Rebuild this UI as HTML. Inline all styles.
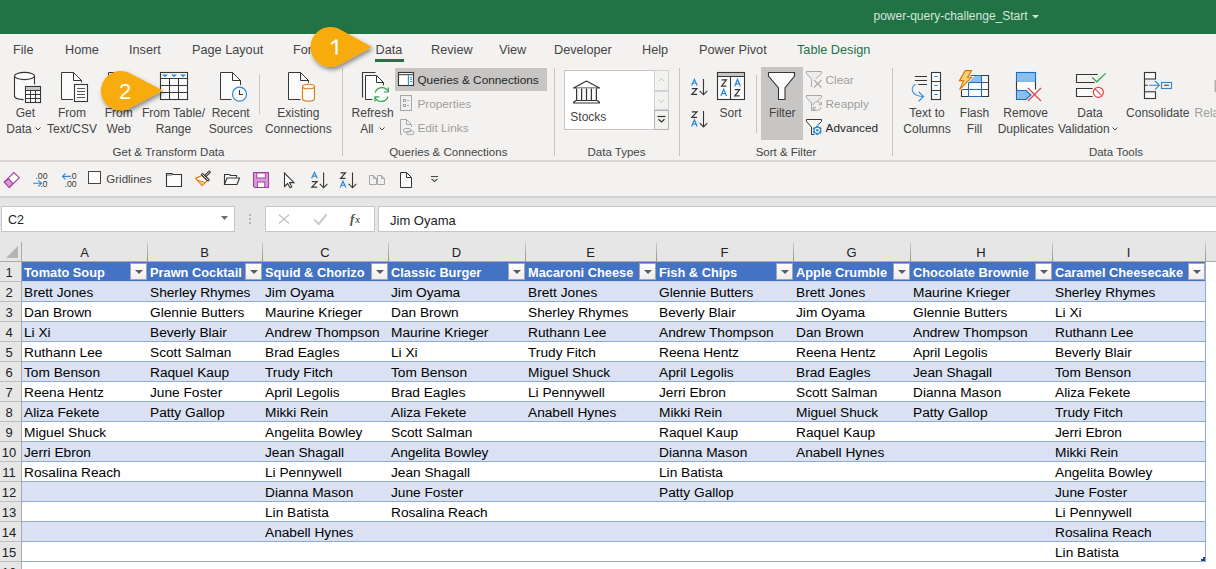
<!DOCTYPE html><html><head><meta charset="utf-8"><style>
html,body{margin:0;padding:0;width:1216px;height:569px;overflow:hidden;background:#f3f2f1;font-family:"Liberation Sans",sans-serif;position:relative}
div{box-sizing:border-box}
svg{overflow:visible}
</style></head><body>
<div style="position:absolute;left:0px;top:242px;width:1216px;height:20px;background:#e6e6e6"></div>
<div style="position:absolute;left:0px;top:262px;width:22px;height:307px;background:#e6e6e6"></div>
<div style="position:absolute;left:22px;top:262px;width:1194px;height:307px;background:#fff"></div>
<div style="position:absolute;left:21px;top:242px;width:1px;height:20px;background:linear-gradient(#cdcdcd,#8f8f8f)"></div>
<div style="position:absolute;left:147px;top:242px;width:1px;height:20px;background:linear-gradient(#cdcdcd,#8f8f8f)"></div>
<div style="position:absolute;left:262px;top:242px;width:1px;height:20px;background:linear-gradient(#cdcdcd,#8f8f8f)"></div>
<div style="position:absolute;left:388px;top:242px;width:1px;height:20px;background:linear-gradient(#cdcdcd,#8f8f8f)"></div>
<div style="position:absolute;left:525px;top:242px;width:1px;height:20px;background:linear-gradient(#cdcdcd,#8f8f8f)"></div>
<div style="position:absolute;left:656px;top:242px;width:1px;height:20px;background:linear-gradient(#cdcdcd,#8f8f8f)"></div>
<div style="position:absolute;left:793px;top:242px;width:1px;height:20px;background:linear-gradient(#cdcdcd,#8f8f8f)"></div>
<div style="position:absolute;left:910px;top:242px;width:1px;height:20px;background:linear-gradient(#cdcdcd,#8f8f8f)"></div>
<div style="position:absolute;left:1052px;top:242px;width:1px;height:20px;background:linear-gradient(#cdcdcd,#8f8f8f)"></div>
<div style="position:absolute;left:1205px;top:242px;width:1px;height:20px;background:linear-gradient(#cdcdcd,#8f8f8f)"></div>
<div style="position:absolute;left:0px;top:261px;width:1216px;height:1px;background:#ababab"></div>
<div style="position:absolute;left:21px;top:242px;width:1px;height:327px;background:#ababab"></div>
<svg style="position:absolute;left:6px;top:246px" width="12" height="12"><polygon points="12,0 12,12 0,12" fill="#b4b4b4"/></svg>
<div style="position:absolute;left:22px;top:242px;width:125px;height:20px;text-align:center;line-height:22px;font-size:13px;color:#222">A</div>
<div style="position:absolute;left:147px;top:242px;width:115px;height:20px;text-align:center;line-height:22px;font-size:13px;color:#222">B</div>
<div style="position:absolute;left:262px;top:242px;width:126px;height:20px;text-align:center;line-height:22px;font-size:13px;color:#222">C</div>
<div style="position:absolute;left:388px;top:242px;width:137px;height:20px;text-align:center;line-height:22px;font-size:13px;color:#222">D</div>
<div style="position:absolute;left:525px;top:242px;width:131px;height:20px;text-align:center;line-height:22px;font-size:13px;color:#222">E</div>
<div style="position:absolute;left:656px;top:242px;width:137px;height:20px;text-align:center;line-height:22px;font-size:13px;color:#222">F</div>
<div style="position:absolute;left:793px;top:242px;width:117px;height:20px;text-align:center;line-height:22px;font-size:13px;color:#222">G</div>
<div style="position:absolute;left:910px;top:242px;width:142px;height:20px;text-align:center;line-height:22px;font-size:13px;color:#222">H</div>
<div style="position:absolute;left:1052px;top:242px;width:153px;height:20px;text-align:center;line-height:22px;font-size:13px;color:#222">I</div>
<div style="position:absolute;left:0px;top:262px;width:18px;height:19px;text-align:center;line-height:21px;font-size:13px;color:#222">1</div>
<div style="position:absolute;left:0px;top:281px;width:21px;height:1px;background:#bdbdbd"></div>
<div style="position:absolute;left:0px;top:282px;width:18px;height:19px;text-align:center;line-height:21px;font-size:13px;color:#222">2</div>
<div style="position:absolute;left:0px;top:301px;width:21px;height:1px;background:#bdbdbd"></div>
<div style="position:absolute;left:0px;top:302px;width:18px;height:19px;text-align:center;line-height:21px;font-size:13px;color:#222">3</div>
<div style="position:absolute;left:0px;top:321px;width:21px;height:1px;background:#bdbdbd"></div>
<div style="position:absolute;left:0px;top:322px;width:18px;height:19px;text-align:center;line-height:21px;font-size:13px;color:#222">4</div>
<div style="position:absolute;left:0px;top:341px;width:21px;height:1px;background:#bdbdbd"></div>
<div style="position:absolute;left:0px;top:342px;width:18px;height:19px;text-align:center;line-height:21px;font-size:13px;color:#222">5</div>
<div style="position:absolute;left:0px;top:361px;width:21px;height:1px;background:#bdbdbd"></div>
<div style="position:absolute;left:0px;top:362px;width:18px;height:19px;text-align:center;line-height:21px;font-size:13px;color:#222">6</div>
<div style="position:absolute;left:0px;top:381px;width:21px;height:1px;background:#bdbdbd"></div>
<div style="position:absolute;left:0px;top:382px;width:18px;height:19px;text-align:center;line-height:21px;font-size:13px;color:#222">7</div>
<div style="position:absolute;left:0px;top:401px;width:21px;height:1px;background:#bdbdbd"></div>
<div style="position:absolute;left:0px;top:402px;width:18px;height:19px;text-align:center;line-height:21px;font-size:13px;color:#222">8</div>
<div style="position:absolute;left:0px;top:421px;width:21px;height:1px;background:#bdbdbd"></div>
<div style="position:absolute;left:0px;top:422px;width:18px;height:19px;text-align:center;line-height:21px;font-size:13px;color:#222">9</div>
<div style="position:absolute;left:0px;top:441px;width:21px;height:1px;background:#bdbdbd"></div>
<div style="position:absolute;left:0px;top:442px;width:18px;height:19px;text-align:center;line-height:21px;font-size:13px;color:#222">10</div>
<div style="position:absolute;left:0px;top:461px;width:21px;height:1px;background:#bdbdbd"></div>
<div style="position:absolute;left:0px;top:462px;width:18px;height:19px;text-align:center;line-height:21px;font-size:13px;color:#222">11</div>
<div style="position:absolute;left:0px;top:481px;width:21px;height:1px;background:#bdbdbd"></div>
<div style="position:absolute;left:0px;top:482px;width:18px;height:19px;text-align:center;line-height:21px;font-size:13px;color:#222">12</div>
<div style="position:absolute;left:0px;top:501px;width:21px;height:1px;background:#bdbdbd"></div>
<div style="position:absolute;left:0px;top:502px;width:18px;height:19px;text-align:center;line-height:21px;font-size:13px;color:#222">13</div>
<div style="position:absolute;left:0px;top:521px;width:21px;height:1px;background:#bdbdbd"></div>
<div style="position:absolute;left:0px;top:522px;width:18px;height:19px;text-align:center;line-height:21px;font-size:13px;color:#222">14</div>
<div style="position:absolute;left:0px;top:541px;width:21px;height:1px;background:#bdbdbd"></div>
<div style="position:absolute;left:0px;top:542px;width:18px;height:19px;text-align:center;line-height:21px;font-size:13px;color:#222">15</div>
<div style="position:absolute;left:0px;top:561px;width:21px;height:1px;background:#bdbdbd"></div>
<div style="position:absolute;left:0px;top:562px;width:18px;height:19px;text-align:center;line-height:21px;font-size:13px;color:#222">16</div>
<div style="position:absolute;left:0px;top:581px;width:21px;height:1px;background:#bdbdbd"></div>
<div style="position:absolute;left:22px;top:262px;width:1183px;height:19px;background:#4472c4"></div>
<div style="position:absolute;left:22px;top:281px;width:1183px;height:1px;background:#c9d4eb"></div>
<div style="position:absolute;left:22px;top:282px;width:1183px;height:19px;background:#d9e1f2"></div>
<div style="position:absolute;left:22px;top:301px;width:1184px;height:1px;background:#8ea9db"></div>
<div style="position:absolute;left:22px;top:321px;width:1184px;height:1px;background:#8ea9db"></div>
<div style="position:absolute;left:22px;top:322px;width:1183px;height:19px;background:#d9e1f2"></div>
<div style="position:absolute;left:22px;top:341px;width:1184px;height:1px;background:#8ea9db"></div>
<div style="position:absolute;left:22px;top:361px;width:1184px;height:1px;background:#8ea9db"></div>
<div style="position:absolute;left:22px;top:362px;width:1183px;height:19px;background:#d9e1f2"></div>
<div style="position:absolute;left:22px;top:381px;width:1184px;height:1px;background:#8ea9db"></div>
<div style="position:absolute;left:22px;top:401px;width:1184px;height:1px;background:#8ea9db"></div>
<div style="position:absolute;left:22px;top:402px;width:1183px;height:19px;background:#d9e1f2"></div>
<div style="position:absolute;left:22px;top:421px;width:1184px;height:1px;background:#8ea9db"></div>
<div style="position:absolute;left:22px;top:441px;width:1184px;height:1px;background:#8ea9db"></div>
<div style="position:absolute;left:22px;top:442px;width:1183px;height:19px;background:#d9e1f2"></div>
<div style="position:absolute;left:22px;top:461px;width:1184px;height:1px;background:#8ea9db"></div>
<div style="position:absolute;left:22px;top:481px;width:1184px;height:1px;background:#8ea9db"></div>
<div style="position:absolute;left:22px;top:482px;width:1183px;height:19px;background:#d9e1f2"></div>
<div style="position:absolute;left:22px;top:501px;width:1184px;height:1px;background:#8ea9db"></div>
<div style="position:absolute;left:22px;top:521px;width:1184px;height:1px;background:#8ea9db"></div>
<div style="position:absolute;left:22px;top:522px;width:1183px;height:19px;background:#d9e1f2"></div>
<div style="position:absolute;left:22px;top:541px;width:1184px;height:1px;background:#8ea9db"></div>
<div style="position:absolute;left:22px;top:561px;width:1184px;height:1px;background:#8ea9db"></div>
<div style="position:absolute;left:1205px;top:262px;width:1px;height:300px;background:#8ea9db"></div>
<div style="position:absolute;left:1203px;top:557px;width:2px;height:4px;background:#2d3f9c"></div>
<div style="position:absolute;left:1201px;top:559px;width:4px;height:2px;background:#2d3f9c"></div>
<div style="position:absolute;left:24px;top:262px;width:105px;height:19px;font-weight:bold;color:#fff;font-size:12.8px;line-height:21px;white-space:nowrap">Tomato Soup</div>
<div style="position:absolute;left:130px;top:263px;width:17px;height:17px;background:linear-gradient(#fff,#ececec);border:1px solid #a6a6a6"><svg style="position:absolute;left:4px;top:6px" width="8" height="4"><polygon points="0,0 8,0 4,4" fill="#5b5b5b"/></svg></div>
<div style="position:absolute;left:24px;top:282px;width:123px;height:19px;color:#000;font-size:13.7px;line-height:21px;white-space:nowrap">Brett Jones</div>
<div style="position:absolute;left:24px;top:302px;width:123px;height:19px;color:#000;font-size:13.7px;line-height:21px;white-space:nowrap">Dan Brown</div>
<div style="position:absolute;left:24px;top:322px;width:123px;height:19px;color:#000;font-size:13.7px;line-height:21px;white-space:nowrap">Li Xi</div>
<div style="position:absolute;left:24px;top:342px;width:123px;height:19px;color:#000;font-size:13.7px;line-height:21px;white-space:nowrap">Ruthann Lee</div>
<div style="position:absolute;left:24px;top:362px;width:123px;height:19px;color:#000;font-size:13.7px;line-height:21px;white-space:nowrap">Tom Benson</div>
<div style="position:absolute;left:24px;top:382px;width:123px;height:19px;color:#000;font-size:13.7px;line-height:21px;white-space:nowrap">Reena Hentz</div>
<div style="position:absolute;left:24px;top:402px;width:123px;height:19px;color:#000;font-size:13.7px;line-height:21px;white-space:nowrap">Aliza Fekete</div>
<div style="position:absolute;left:24px;top:422px;width:123px;height:19px;color:#000;font-size:13.7px;line-height:21px;white-space:nowrap">Miguel Shuck</div>
<div style="position:absolute;left:24px;top:442px;width:123px;height:19px;color:#000;font-size:13.7px;line-height:21px;white-space:nowrap">Jerri Ebron</div>
<div style="position:absolute;left:24px;top:462px;width:123px;height:19px;color:#000;font-size:13.7px;line-height:21px;white-space:nowrap">Rosalina Reach</div>
<div style="position:absolute;left:150px;top:262px;width:95px;height:19px;font-weight:bold;color:#fff;font-size:12.8px;line-height:21px;white-space:nowrap">Prawn Cocktail</div>
<div style="position:absolute;left:245px;top:263px;width:17px;height:17px;background:linear-gradient(#fff,#ececec);border:1px solid #a6a6a6"><svg style="position:absolute;left:4px;top:6px" width="8" height="4"><polygon points="0,0 8,0 4,4" fill="#5b5b5b"/></svg></div>
<div style="position:absolute;left:150px;top:282px;width:113px;height:19px;color:#000;font-size:13.7px;line-height:21px;white-space:nowrap">Sherley Rhymes</div>
<div style="position:absolute;left:150px;top:302px;width:113px;height:19px;color:#000;font-size:13.7px;line-height:21px;white-space:nowrap">Glennie Butters</div>
<div style="position:absolute;left:150px;top:322px;width:113px;height:19px;color:#000;font-size:13.7px;line-height:21px;white-space:nowrap">Beverly Blair</div>
<div style="position:absolute;left:150px;top:342px;width:113px;height:19px;color:#000;font-size:13.7px;line-height:21px;white-space:nowrap">Scott Salman</div>
<div style="position:absolute;left:150px;top:362px;width:113px;height:19px;color:#000;font-size:13.7px;line-height:21px;white-space:nowrap">Raquel Kaup</div>
<div style="position:absolute;left:150px;top:382px;width:113px;height:19px;color:#000;font-size:13.7px;line-height:21px;white-space:nowrap">June Foster</div>
<div style="position:absolute;left:150px;top:402px;width:113px;height:19px;color:#000;font-size:13.7px;line-height:21px;white-space:nowrap">Patty Gallop</div>
<div style="position:absolute;left:265px;top:262px;width:106px;height:19px;font-weight:bold;color:#fff;font-size:12.8px;line-height:21px;white-space:nowrap">Squid &amp; Chorizo</div>
<div style="position:absolute;left:371px;top:263px;width:17px;height:17px;background:linear-gradient(#fff,#ececec);border:1px solid #a6a6a6"><svg style="position:absolute;left:4px;top:6px" width="8" height="4"><polygon points="0,0 8,0 4,4" fill="#5b5b5b"/></svg></div>
<div style="position:absolute;left:265px;top:282px;width:124px;height:19px;color:#000;font-size:13.7px;line-height:21px;white-space:nowrap">Jim Oyama</div>
<div style="position:absolute;left:265px;top:302px;width:124px;height:19px;color:#000;font-size:13.7px;line-height:21px;white-space:nowrap">Maurine Krieger</div>
<div style="position:absolute;left:265px;top:322px;width:124px;height:19px;color:#000;font-size:13.7px;line-height:21px;white-space:nowrap">Andrew Thompson</div>
<div style="position:absolute;left:265px;top:342px;width:124px;height:19px;color:#000;font-size:13.7px;line-height:21px;white-space:nowrap">Brad Eagles</div>
<div style="position:absolute;left:265px;top:362px;width:124px;height:19px;color:#000;font-size:13.7px;line-height:21px;white-space:nowrap">Trudy Fitch</div>
<div style="position:absolute;left:265px;top:382px;width:124px;height:19px;color:#000;font-size:13.7px;line-height:21px;white-space:nowrap">April Legolis</div>
<div style="position:absolute;left:265px;top:402px;width:124px;height:19px;color:#000;font-size:13.7px;line-height:21px;white-space:nowrap">Mikki Rein</div>
<div style="position:absolute;left:265px;top:422px;width:124px;height:19px;color:#000;font-size:13.7px;line-height:21px;white-space:nowrap">Angelita Bowley</div>
<div style="position:absolute;left:265px;top:442px;width:124px;height:19px;color:#000;font-size:13.7px;line-height:21px;white-space:nowrap">Jean Shagall</div>
<div style="position:absolute;left:265px;top:462px;width:124px;height:19px;color:#000;font-size:13.7px;line-height:21px;white-space:nowrap">Li Pennywell</div>
<div style="position:absolute;left:265px;top:482px;width:124px;height:19px;color:#000;font-size:13.7px;line-height:21px;white-space:nowrap">Dianna Mason</div>
<div style="position:absolute;left:265px;top:502px;width:124px;height:19px;color:#000;font-size:13.7px;line-height:21px;white-space:nowrap">Lin Batista</div>
<div style="position:absolute;left:265px;top:522px;width:124px;height:19px;color:#000;font-size:13.7px;line-height:21px;white-space:nowrap">Anabell Hynes</div>
<div style="position:absolute;left:391px;top:262px;width:117px;height:19px;font-weight:bold;color:#fff;font-size:12.8px;line-height:21px;white-space:nowrap">Classic Burger</div>
<div style="position:absolute;left:508px;top:263px;width:17px;height:17px;background:linear-gradient(#fff,#ececec);border:1px solid #a6a6a6"><svg style="position:absolute;left:4px;top:6px" width="8" height="4"><polygon points="0,0 8,0 4,4" fill="#5b5b5b"/></svg></div>
<div style="position:absolute;left:391px;top:282px;width:135px;height:19px;color:#000;font-size:13.7px;line-height:21px;white-space:nowrap">Jim Oyama</div>
<div style="position:absolute;left:391px;top:302px;width:135px;height:19px;color:#000;font-size:13.7px;line-height:21px;white-space:nowrap">Dan Brown</div>
<div style="position:absolute;left:391px;top:322px;width:135px;height:19px;color:#000;font-size:13.7px;line-height:21px;white-space:nowrap">Maurine Krieger</div>
<div style="position:absolute;left:391px;top:342px;width:135px;height:19px;color:#000;font-size:13.7px;line-height:21px;white-space:nowrap">Li Xi</div>
<div style="position:absolute;left:391px;top:362px;width:135px;height:19px;color:#000;font-size:13.7px;line-height:21px;white-space:nowrap">Tom Benson</div>
<div style="position:absolute;left:391px;top:382px;width:135px;height:19px;color:#000;font-size:13.7px;line-height:21px;white-space:nowrap">Brad Eagles</div>
<div style="position:absolute;left:391px;top:402px;width:135px;height:19px;color:#000;font-size:13.7px;line-height:21px;white-space:nowrap">Aliza Fekete</div>
<div style="position:absolute;left:391px;top:422px;width:135px;height:19px;color:#000;font-size:13.7px;line-height:21px;white-space:nowrap">Scott Salman</div>
<div style="position:absolute;left:391px;top:442px;width:135px;height:19px;color:#000;font-size:13.7px;line-height:21px;white-space:nowrap">Angelita Bowley</div>
<div style="position:absolute;left:391px;top:462px;width:135px;height:19px;color:#000;font-size:13.7px;line-height:21px;white-space:nowrap">Jean Shagall</div>
<div style="position:absolute;left:391px;top:482px;width:135px;height:19px;color:#000;font-size:13.7px;line-height:21px;white-space:nowrap">June Foster</div>
<div style="position:absolute;left:391px;top:502px;width:135px;height:19px;color:#000;font-size:13.7px;line-height:21px;white-space:nowrap">Rosalina Reach</div>
<div style="position:absolute;left:528px;top:262px;width:111px;height:19px;font-weight:bold;color:#fff;font-size:12.8px;line-height:21px;white-space:nowrap">Macaroni Cheese</div>
<div style="position:absolute;left:639px;top:263px;width:17px;height:17px;background:linear-gradient(#fff,#ececec);border:1px solid #a6a6a6"><svg style="position:absolute;left:4px;top:6px" width="8" height="4"><polygon points="0,0 8,0 4,4" fill="#5b5b5b"/></svg></div>
<div style="position:absolute;left:528px;top:282px;width:129px;height:19px;color:#000;font-size:13.7px;line-height:21px;white-space:nowrap">Brett Jones</div>
<div style="position:absolute;left:528px;top:302px;width:129px;height:19px;color:#000;font-size:13.7px;line-height:21px;white-space:nowrap">Sherley Rhymes</div>
<div style="position:absolute;left:528px;top:322px;width:129px;height:19px;color:#000;font-size:13.7px;line-height:21px;white-space:nowrap">Ruthann Lee</div>
<div style="position:absolute;left:528px;top:342px;width:129px;height:19px;color:#000;font-size:13.7px;line-height:21px;white-space:nowrap">Trudy Fitch</div>
<div style="position:absolute;left:528px;top:362px;width:129px;height:19px;color:#000;font-size:13.7px;line-height:21px;white-space:nowrap">Miguel Shuck</div>
<div style="position:absolute;left:528px;top:382px;width:129px;height:19px;color:#000;font-size:13.7px;line-height:21px;white-space:nowrap">Li Pennywell</div>
<div style="position:absolute;left:528px;top:402px;width:129px;height:19px;color:#000;font-size:13.7px;line-height:21px;white-space:nowrap">Anabell Hynes</div>
<div style="position:absolute;left:659px;top:262px;width:117px;height:19px;font-weight:bold;color:#fff;font-size:12.8px;line-height:21px;white-space:nowrap">Fish &amp; Chips</div>
<div style="position:absolute;left:776px;top:263px;width:17px;height:17px;background:linear-gradient(#fff,#ececec);border:1px solid #a6a6a6"><svg style="position:absolute;left:4px;top:6px" width="8" height="4"><polygon points="0,0 8,0 4,4" fill="#5b5b5b"/></svg></div>
<div style="position:absolute;left:659px;top:282px;width:135px;height:19px;color:#000;font-size:13.7px;line-height:21px;white-space:nowrap">Glennie Butters</div>
<div style="position:absolute;left:659px;top:302px;width:135px;height:19px;color:#000;font-size:13.7px;line-height:21px;white-space:nowrap">Beverly Blair</div>
<div style="position:absolute;left:659px;top:322px;width:135px;height:19px;color:#000;font-size:13.7px;line-height:21px;white-space:nowrap">Andrew Thompson</div>
<div style="position:absolute;left:659px;top:342px;width:135px;height:19px;color:#000;font-size:13.7px;line-height:21px;white-space:nowrap">Reena Hentz</div>
<div style="position:absolute;left:659px;top:362px;width:135px;height:19px;color:#000;font-size:13.7px;line-height:21px;white-space:nowrap">April Legolis</div>
<div style="position:absolute;left:659px;top:382px;width:135px;height:19px;color:#000;font-size:13.7px;line-height:21px;white-space:nowrap">Jerri Ebron</div>
<div style="position:absolute;left:659px;top:402px;width:135px;height:19px;color:#000;font-size:13.7px;line-height:21px;white-space:nowrap">Mikki Rein</div>
<div style="position:absolute;left:659px;top:422px;width:135px;height:19px;color:#000;font-size:13.7px;line-height:21px;white-space:nowrap">Raquel Kaup</div>
<div style="position:absolute;left:659px;top:442px;width:135px;height:19px;color:#000;font-size:13.7px;line-height:21px;white-space:nowrap">Dianna Mason</div>
<div style="position:absolute;left:659px;top:462px;width:135px;height:19px;color:#000;font-size:13.7px;line-height:21px;white-space:nowrap">Lin Batista</div>
<div style="position:absolute;left:659px;top:482px;width:135px;height:19px;color:#000;font-size:13.7px;line-height:21px;white-space:nowrap">Patty Gallop</div>
<div style="position:absolute;left:796px;top:262px;width:97px;height:19px;font-weight:bold;color:#fff;font-size:12.8px;line-height:21px;white-space:nowrap">Apple Crumble</div>
<div style="position:absolute;left:893px;top:263px;width:17px;height:17px;background:linear-gradient(#fff,#ececec);border:1px solid #a6a6a6"><svg style="position:absolute;left:4px;top:6px" width="8" height="4"><polygon points="0,0 8,0 4,4" fill="#5b5b5b"/></svg></div>
<div style="position:absolute;left:796px;top:282px;width:115px;height:19px;color:#000;font-size:13.7px;line-height:21px;white-space:nowrap">Brett Jones</div>
<div style="position:absolute;left:796px;top:302px;width:115px;height:19px;color:#000;font-size:13.7px;line-height:21px;white-space:nowrap">Jim Oyama</div>
<div style="position:absolute;left:796px;top:322px;width:115px;height:19px;color:#000;font-size:13.7px;line-height:21px;white-space:nowrap">Dan Brown</div>
<div style="position:absolute;left:796px;top:342px;width:115px;height:19px;color:#000;font-size:13.7px;line-height:21px;white-space:nowrap">Reena Hentz</div>
<div style="position:absolute;left:796px;top:362px;width:115px;height:19px;color:#000;font-size:13.7px;line-height:21px;white-space:nowrap">Brad Eagles</div>
<div style="position:absolute;left:796px;top:382px;width:115px;height:19px;color:#000;font-size:13.7px;line-height:21px;white-space:nowrap">Scott Salman</div>
<div style="position:absolute;left:796px;top:402px;width:115px;height:19px;color:#000;font-size:13.7px;line-height:21px;white-space:nowrap">Miguel Shuck</div>
<div style="position:absolute;left:796px;top:422px;width:115px;height:19px;color:#000;font-size:13.7px;line-height:21px;white-space:nowrap">Raquel Kaup</div>
<div style="position:absolute;left:796px;top:442px;width:115px;height:19px;color:#000;font-size:13.7px;line-height:21px;white-space:nowrap">Anabell Hynes</div>
<div style="position:absolute;left:913px;top:262px;width:122px;height:19px;font-weight:bold;color:#fff;font-size:12.8px;line-height:21px;white-space:nowrap">Chocolate Brownie</div>
<div style="position:absolute;left:1035px;top:263px;width:17px;height:17px;background:linear-gradient(#fff,#ececec);border:1px solid #a6a6a6"><svg style="position:absolute;left:4px;top:6px" width="8" height="4"><polygon points="0,0 8,0 4,4" fill="#5b5b5b"/></svg></div>
<div style="position:absolute;left:913px;top:282px;width:140px;height:19px;color:#000;font-size:13.7px;line-height:21px;white-space:nowrap">Maurine Krieger</div>
<div style="position:absolute;left:913px;top:302px;width:140px;height:19px;color:#000;font-size:13.7px;line-height:21px;white-space:nowrap">Glennie Butters</div>
<div style="position:absolute;left:913px;top:322px;width:140px;height:19px;color:#000;font-size:13.7px;line-height:21px;white-space:nowrap">Andrew Thompson</div>
<div style="position:absolute;left:913px;top:342px;width:140px;height:19px;color:#000;font-size:13.7px;line-height:21px;white-space:nowrap">April Legolis</div>
<div style="position:absolute;left:913px;top:362px;width:140px;height:19px;color:#000;font-size:13.7px;line-height:21px;white-space:nowrap">Jean Shagall</div>
<div style="position:absolute;left:913px;top:382px;width:140px;height:19px;color:#000;font-size:13.7px;line-height:21px;white-space:nowrap">Dianna Mason</div>
<div style="position:absolute;left:913px;top:402px;width:140px;height:19px;color:#000;font-size:13.7px;line-height:21px;white-space:nowrap">Patty Gallop</div>
<div style="position:absolute;left:1055px;top:262px;width:133px;height:19px;font-weight:bold;color:#fff;font-size:12.8px;line-height:21px;white-space:nowrap">Caramel Cheesecake</div>
<div style="position:absolute;left:1188px;top:263px;width:17px;height:17px;background:linear-gradient(#fff,#ececec);border:1px solid #a6a6a6"><svg style="position:absolute;left:4px;top:6px" width="8" height="4"><polygon points="0,0 8,0 4,4" fill="#5b5b5b"/></svg></div>
<div style="position:absolute;left:1055px;top:282px;width:151px;height:19px;color:#000;font-size:13.7px;line-height:21px;white-space:nowrap">Sherley Rhymes</div>
<div style="position:absolute;left:1055px;top:302px;width:151px;height:19px;color:#000;font-size:13.7px;line-height:21px;white-space:nowrap">Li Xi</div>
<div style="position:absolute;left:1055px;top:322px;width:151px;height:19px;color:#000;font-size:13.7px;line-height:21px;white-space:nowrap">Ruthann Lee</div>
<div style="position:absolute;left:1055px;top:342px;width:151px;height:19px;color:#000;font-size:13.7px;line-height:21px;white-space:nowrap">Beverly Blair</div>
<div style="position:absolute;left:1055px;top:362px;width:151px;height:19px;color:#000;font-size:13.7px;line-height:21px;white-space:nowrap">Tom Benson</div>
<div style="position:absolute;left:1055px;top:382px;width:151px;height:19px;color:#000;font-size:13.7px;line-height:21px;white-space:nowrap">Aliza Fekete</div>
<div style="position:absolute;left:1055px;top:402px;width:151px;height:19px;color:#000;font-size:13.7px;line-height:21px;white-space:nowrap">Trudy Fitch</div>
<div style="position:absolute;left:1055px;top:422px;width:151px;height:19px;color:#000;font-size:13.7px;line-height:21px;white-space:nowrap">Jerri Ebron</div>
<div style="position:absolute;left:1055px;top:442px;width:151px;height:19px;color:#000;font-size:13.7px;line-height:21px;white-space:nowrap">Mikki Rein</div>
<div style="position:absolute;left:1055px;top:462px;width:151px;height:19px;color:#000;font-size:13.7px;line-height:21px;white-space:nowrap">Angelita Bowley</div>
<div style="position:absolute;left:1055px;top:482px;width:151px;height:19px;color:#000;font-size:13.7px;line-height:21px;white-space:nowrap">June Foster</div>
<div style="position:absolute;left:1055px;top:502px;width:151px;height:19px;color:#000;font-size:13.7px;line-height:21px;white-space:nowrap">Li Pennywell</div>
<div style="position:absolute;left:1055px;top:522px;width:151px;height:19px;color:#000;font-size:13.7px;line-height:21px;white-space:nowrap">Rosalina Reach</div>
<div style="position:absolute;left:1055px;top:542px;width:151px;height:19px;color:#000;font-size:13.7px;line-height:21px;white-space:nowrap">Lin Batista</div>
<div style="position:absolute;left:0px;top:0px;width:1216px;height:34px;background:#217346"></div>
<div style="position:absolute;left:873.5px;top:9.84px;font-size:12px;line-height:12px;color:#d4e6da;white-space:nowrap;">power-query-challenge_Start</div>
<svg style="position:absolute;left:1032px;top:15px" width="7" height="4"><polygon points="0,0 7,0 3.5,3.5" fill="#d4e6da"/></svg>
<div style="position:absolute;left:13px;top:44.05px;font-size:12.7px;line-height:12.7px;color:#444;white-space:nowrap;">File</div>
<div style="position:absolute;left:65px;top:44.05px;font-size:12.7px;line-height:12.7px;color:#444;white-space:nowrap;">Home</div>
<div style="position:absolute;left:129px;top:44.05px;font-size:12.7px;line-height:12.7px;color:#444;white-space:nowrap;">Insert</div>
<div style="position:absolute;left:192px;top:44.05px;font-size:12.7px;line-height:12.7px;color:#444;white-space:nowrap;">Page Layout</div>
<div style="position:absolute;left:293px;top:44.05px;font-size:12.7px;line-height:12.7px;color:#444;white-space:nowrap;">Formulas</div>
<div style="position:absolute;left:375.5px;top:44.05px;font-size:12.7px;line-height:12.7px;color:#444;white-space:nowrap;">Data</div>
<div style="position:absolute;left:431px;top:44.05px;font-size:12.7px;line-height:12.7px;color:#444;white-space:nowrap;">Review</div>
<div style="position:absolute;left:499px;top:44.05px;font-size:12.7px;line-height:12.7px;color:#444;white-space:nowrap;">View</div>
<div style="position:absolute;left:554px;top:44.05px;font-size:12.7px;line-height:12.7px;color:#444;white-space:nowrap;">Developer</div>
<div style="position:absolute;left:642px;top:44.05px;font-size:12.7px;line-height:12.7px;color:#444;white-space:nowrap;">Help</div>
<div style="position:absolute;left:699px;top:44.05px;font-size:12.7px;line-height:12.7px;color:#444;white-space:nowrap;">Power Pivot</div>
<div style="position:absolute;left:797px;top:44.05px;font-size:12.7px;line-height:12.7px;color:#217346;white-space:nowrap;">Table Design</div>
<div style="position:absolute;left:375px;top:59px;width:29px;height:3px;background:#217346"></div>
<div style="position:absolute;left:395px;top:68px;width:152px;height:23px;background:#c8c6c4"></div>
<div style="position:absolute;left:761px;top:67px;width:42px;height:73px;background:#c8c6c4"></div>
<div style="position:absolute;left:342px;top:68px;width:1px;height:88px;background:#c8c6c4"></div>
<div style="position:absolute;left:554px;top:68px;width:1px;height:88px;background:#c8c6c4"></div>
<div style="position:absolute;left:679px;top:68px;width:1px;height:88px;background:#c8c6c4"></div>
<div style="position:absolute;left:892px;top:68px;width:1px;height:88px;background:#c8c6c4"></div>
<div style="position:absolute;left:259px;top:74px;width:1px;height:40px;background:#c8c6c4"></div>
<div style="position:absolute;left:756px;top:75px;width:1px;height:58px;background:#c8c6c4"></div>
<div style="position:absolute;left:-124.7px;width:300px;text-align:center;top:106.84px;font-size:12px;line-height:12px;color:#444;white-space:nowrap;">Get</div>
<div style="position:absolute;left:-131px;width:300px;text-align:center;top:122.84px;font-size:12px;line-height:12px;color:#444;white-space:nowrap;">Data</div>
<div style="position:absolute;left:-78px;width:300px;text-align:center;top:106.84px;font-size:12px;line-height:12px;color:#444;white-space:nowrap;">From</div>
<div style="position:absolute;left:-78px;width:300px;text-align:center;top:122.84px;font-size:12px;line-height:12px;color:#444;white-space:nowrap;">Text/CSV</div>
<div style="position:absolute;left:-31.299999999999997px;width:300px;text-align:center;top:106.84px;font-size:12px;line-height:12px;color:#444;white-space:nowrap;">From</div>
<div style="position:absolute;left:-31.299999999999997px;width:300px;text-align:center;top:122.84px;font-size:12px;line-height:12px;color:#444;white-space:nowrap;">Web</div>
<div style="position:absolute;left:23.5px;width:300px;text-align:center;top:106.84px;font-size:12px;line-height:12px;color:#444;white-space:nowrap;">From Table/</div>
<div style="position:absolute;left:23.5px;width:300px;text-align:center;top:122.84px;font-size:12px;line-height:12px;color:#444;white-space:nowrap;">Range</div>
<div style="position:absolute;left:80.69999999999999px;width:300px;text-align:center;top:106.84px;font-size:12px;line-height:12px;color:#444;white-space:nowrap;">Recent</div>
<div style="position:absolute;left:80.69999999999999px;width:300px;text-align:center;top:122.84px;font-size:12px;line-height:12px;color:#444;white-space:nowrap;">Sources</div>
<div style="position:absolute;left:148.3px;width:300px;text-align:center;top:106.84px;font-size:12px;line-height:12px;color:#444;white-space:nowrap;">Existing</div>
<div style="position:absolute;left:148.3px;width:300px;text-align:center;top:122.84px;font-size:12px;line-height:12px;color:#444;white-space:nowrap;">Connections</div>
<div style="position:absolute;left:777px;width:300px;text-align:center;top:106.84px;font-size:12px;line-height:12px;color:#444;white-space:nowrap;">Text to</div>
<div style="position:absolute;left:777px;width:300px;text-align:center;top:122.84px;font-size:12px;line-height:12px;color:#444;white-space:nowrap;">Columns</div>
<div style="position:absolute;left:824.5px;width:300px;text-align:center;top:106.84px;font-size:12px;line-height:12px;color:#444;white-space:nowrap;">Flash</div>
<div style="position:absolute;left:824.5px;width:300px;text-align:center;top:122.84px;font-size:12px;line-height:12px;color:#444;white-space:nowrap;">Fill</div>
<div style="position:absolute;left:875.7px;width:300px;text-align:center;top:106.84px;font-size:12px;line-height:12px;color:#444;white-space:nowrap;">Remove</div>
<div style="position:absolute;left:875.7px;width:300px;text-align:center;top:122.84px;font-size:12px;line-height:12px;color:#444;white-space:nowrap;">Duplicates</div>
<div style="position:absolute;left:222.60000000000002px;width:300px;text-align:center;top:106.84px;font-size:12px;line-height:12px;color:#444;white-space:nowrap;">Refresh</div>
<div style="position:absolute;left:216.8px;width:300px;text-align:center;top:122.84px;font-size:12px;line-height:12px;color:#444;white-space:nowrap;">All</div>
<div style="position:absolute;left:580.5px;width:300px;text-align:center;top:106.84px;font-size:12px;line-height:12px;color:#444;white-space:nowrap;">Sort</div>
<div style="position:absolute;left:632.3px;width:300px;text-align:center;top:106.84px;font-size:12px;line-height:12px;color:#444;white-space:nowrap;">Filter</div>
<div style="position:absolute;left:940px;width:300px;text-align:center;top:106.84px;font-size:12px;line-height:12px;color:#444;white-space:nowrap;">Data</div>
<div style="position:absolute;left:933.8px;width:300px;text-align:center;top:122.84px;font-size:12px;line-height:12px;color:#444;white-space:nowrap;">Validation</div>
<div style="position:absolute;left:1007.8px;width:300px;text-align:center;top:106.84px;font-size:12px;line-height:12px;color:#444;white-space:nowrap;">Consolidate</div>
<div style="position:absolute;left:1194.6px;top:106.84px;font-size:12px;line-height:12px;color:#a19f9d;white-space:nowrap;">Relationships</div>
<svg style="position:absolute;left:35px;top:127px" width="6" height="4"><polyline points="0.5,0.5 3,3 5.5,0.5" fill="none" stroke="#444" stroke-width="1"/></svg>
<svg style="position:absolute;left:379px;top:127px" width="6" height="4"><polyline points="0.5,0.5 3,3 5.5,0.5" fill="none" stroke="#444" stroke-width="1"/></svg>
<svg style="position:absolute;left:1112px;top:127px" width="6" height="4"><polyline points="0.5,0.5 3,3 5.5,0.5" fill="none" stroke="#444" stroke-width="1"/></svg>
<div style="position:absolute;left:417.4px;top:74.91px;font-size:11.8px;line-height:11.8px;color:#262626;white-space:nowrap;">Queries &amp; Connections</div>
<div style="position:absolute;left:417.4px;top:99.21px;font-size:11.8px;line-height:11.8px;color:#a19f9d;white-space:nowrap;">Properties</div>
<div style="position:absolute;left:417.4px;top:122.91px;font-size:11.8px;line-height:11.8px;color:#a19f9d;white-space:nowrap;">Edit Links</div>
<div style="position:absolute;left:825.6px;top:74.91px;font-size:11.8px;line-height:11.8px;color:#a19f9d;white-space:nowrap;">Clear</div>
<div style="position:absolute;left:825.6px;top:99.21px;font-size:11.8px;line-height:11.8px;color:#a19f9d;white-space:nowrap;">Reapply</div>
<div style="position:absolute;left:825.6px;top:122.91px;font-size:11.8px;line-height:11.8px;color:#262626;white-space:nowrap;">Advanced</div>
<div style="position:absolute;left:564px;top:70px;width:105px;height:60px;background:#fff;border:1px solid #c8c6c4"></div>
<div style="position:absolute;left:654px;top:70px;width:15px;height:21px;border:1px solid #d2d2d2;background:#f3f2f1"></div>
<div style="position:absolute;left:654px;top:91px;width:15px;height:19px;border:1px solid #d2d2d2;background:#f3f2f1"></div>
<div style="position:absolute;left:654px;top:110px;width:15px;height:20px;border:1px solid #b4b4b4;background:#f3f2f1"></div>
<div style="position:absolute;left:570.3px;top:110.84px;font-size:12px;line-height:12px;color:#444;white-space:nowrap;">Stocks</div>
<div style="position:absolute;left:18.5px;width:300px;text-align:center;top:147.07px;font-size:11.5px;line-height:11.5px;color:#444;white-space:nowrap;">Get &amp; Transform Data</div>
<div style="position:absolute;left:298.3px;width:300px;text-align:center;top:147.07px;font-size:11.5px;line-height:11.5px;color:#444;white-space:nowrap;">Queries &amp; Connections</div>
<div style="position:absolute;left:466.5px;width:300px;text-align:center;top:147.07px;font-size:11.5px;line-height:11.5px;color:#444;white-space:nowrap;">Data Types</div>
<div style="position:absolute;left:636px;width:300px;text-align:center;top:147.07px;font-size:11.5px;line-height:11.5px;color:#444;white-space:nowrap;">Sort &amp; Filter</div>
<div style="position:absolute;left:966px;width:300px;text-align:center;top:147.07px;font-size:11.5px;line-height:11.5px;color:#444;white-space:nowrap;">Data Tools</div>
<div style="position:absolute;left:0px;top:160px;width:1216px;height:2px;background:#d8d6d4"></div>
<div style="position:absolute;left:0px;top:196px;width:1216px;height:46px;background:#e6e6e6"></div>
<div style="position:absolute;left:0px;top:196px;width:1216px;height:3px;background:linear-gradient(#cacaca,#e6e6e6)"></div>
<div style="position:absolute;left:88px;top:171px;width:13px;height:13px;background:#fff;border:1px solid #444"></div>
<div style="position:absolute;left:106.3px;top:174.07px;font-size:11.5px;line-height:11.5px;color:#444;white-space:nowrap;">Gridlines</div>
<div style="position:absolute;left:1px;top:206px;width:234px;height:26px;background:#fff;border:1px solid #c6c6c6"></div>
<div style="position:absolute;left:8.1px;top:214.42px;font-size:12.5px;line-height:12.5px;color:#222;white-space:nowrap;">C2</div>
<svg style="position:absolute;left:221px;top:216px" width="8" height="5"><polygon points="0,0 7,0 3.5,4" fill="#6b6b6b"/></svg>
<div style="position:absolute;left:249px;top:214px;width:2px;height:2px;background:#b4b4b4"></div>
<div style="position:absolute;left:249px;top:218px;width:2px;height:2px;background:#b4b4b4"></div>
<div style="position:absolute;left:249px;top:222px;width:2px;height:2px;background:#b4b4b4"></div>
<div style="position:absolute;left:265px;top:206px;width:110px;height:26px;background:#fff;border:1px solid #c6c6c6"></div>
<div style="position:absolute;left:378px;top:206px;width:840px;height:26px;background:#fff;border:1px solid #c6c6c6"></div>
<div style="position:absolute;left:390px;top:214.00px;font-size:13px;line-height:13px;color:#222;white-space:nowrap;">Jim Oyama</div>
<svg style="position:absolute;left:0;top:0" width="1216" height="569" viewBox="0 0 1216 569"><defs><filter id="sh" x="-30%" y="-30%" width="160%" height="160%"><feDropShadow dx="1.5" dy="2.5" stdDeviation="2" flood-color="#000" flood-opacity="0.45"/></filter></defs><path d="M14.5,76 V96 A10,3.7 0 0 0 24.5,99.7 L25,99.7 V86 H34.5 V76 Z" fill="#fbfbfb"/><path d="M14.5,76 V96 A10,3.6 0 0 0 23.5,99.6" fill="none" stroke="#363636" stroke-width="1.1"/><path d="M34.5,76 V84.5" fill="none" stroke="#363636" stroke-width="1.1"/><ellipse cx="24.5" cy="76" rx="10" ry="3.6" fill="#fbfbfb" stroke="#363636" stroke-width="1.1"/><rect x="25.5" y="86.5" width="15" height="16" fill="#fbfbfb" stroke="#363636" stroke-width="1.1"/><rect x="26" y="87" width="14" height="3" fill="#c6c6c6"/><path d="M25.5,90.5 H40.5 M25.5,94.5 H40.5 M25.5,98.5 H40.5 M30.5,90.5 V102.5 M35.5,90.5 V102.5" stroke="#363636" stroke-width="1" fill="none"/><path d="M61.5,72.5 H73.5 L81.5,80.5 V99.5 H61.5 Z" fill="#fbfbfb"/><path d="M73,99.5 H61.5 V72.5 H73.5 L81.5,80.5 V82.5 M73.5,72.5 V80.5 H81.5" fill="none" stroke="#363636" stroke-width="1"/><rect x="74.5" y="84.5" width="13" height="17" fill="#fbfbfb" stroke="#363636" stroke-width="1.1"/><path d="M77,88.5 H85 M77,91.5 H85 M77,94.5 H85 M77,97.5 H85" stroke="#555" stroke-width="1"/><path d="M108.5,72.5 H120.5 L128.5,80.5 V99.5 H108.5 Z" fill="#fbfbfb"/><path d="M128.5,99.5 H108.5 V72.5 H120.5 L128.5,80.5 V99.5 M120.5,72.5 V80.5 H128.5" fill="none" stroke="#363636" stroke-width="1"/><rect x="160.5" y="72.5" width="27" height="27" fill="#fbfbfb" stroke="#363636" stroke-width="1.1"/><path d="M160.5,78.5 H187.5 M160.5,85.5 H187.5 M160.5,92.5 H187.5 M169.5,78.5 V99.5 M178.5,78.5 V99.5" stroke="#363636" stroke-width="1" fill="none"/><polygon points="162,74.5 168,74.5 165,77.2" fill="#2b88d8"/><polygon points="171,74.5 177,74.5 174,77.2" fill="#2b88d8"/><polygon points="180,74.5 186,74.5 183,77.2" fill="#2b88d8"/><path d="M220.5,72.5 H232.5 L240.5,80.5 V99.5 H220.5 Z" fill="#fbfbfb"/><path d="M231.5,99.5 H220.5 V72.5 H232.5 L240.5,80.5 V85 M232.5,72.5 V80.5 H240.5" fill="none" stroke="#363636" stroke-width="1"/><circle cx="239.5" cy="94.2" r="7" fill="#fbfbfb" stroke="#2b88d8" stroke-width="1.2"/><path d="M239.5,90 V94.5 H243" fill="none" stroke="#363636" stroke-width="1.1"/><path d="M288.5,72.5 H300.5 L308.5,80.5 V99.5 H288.5 Z" fill="#fbfbfb"/><path d="M300.5,99.5 H288.5 V72.5 H300.5 L308.5,80.5 V82.7 M300.5,72.5 V80.5 H308.5" fill="none" stroke="#363636" stroke-width="1"/><path d="M302.5,86.5 V98.8 A6,2.3 0 0 0 314.5,98.8 V86.5 Z" fill="#fbfbfb" stroke="#de7a14" stroke-width="1.1"/><ellipse cx="308.5" cy="86.5" rx="6" ry="2.3" fill="#fbfbfb" stroke="#de7a14" stroke-width="1.1"/><path d="M362.5,97.5 V72.5 H375.5" fill="none" stroke="#363636" stroke-width="1.1"/><path d="M365.5,75.5 H376.5 L383.5,82.5 V99.5 H365.5 Z" fill="#fbfbfb"/><path d="M372.5,99.5 H365.5 V75.5 H376.5 L383.5,82.5 V85.3 M376.5,75.5 V82.5 H383.5" fill="none" stroke="#363636" stroke-width="1"/><circle cx="381.6" cy="94.5" r="8.5" fill="#fbfbfb"/><path d="M375.2,92.5 A7,7 0 0 1 388.2,91.5" fill="none" stroke="#33a24a" stroke-width="1.2"/><path d="M388.2,87.5 V92 H383.8" fill="none" stroke="#33a24a" stroke-width="1.2"/><path d="M388,96.5 A7,7 0 0 1 375,97.5" fill="none" stroke="#33a24a" stroke-width="1.2"/><path d="M375,101.5 V96.8 H379.4" fill="none" stroke="#33a24a" stroke-width="1.2"/><rect x="398.5" y="72.5" width="15" height="13" fill="#fff" stroke="#363636" stroke-width="1.1"/><path d="M398.5,74.7 H413.5" stroke="#363636" stroke-width="1"/><path d="M408.4,75 V85.5" stroke="#2b88d8" stroke-width="1.1"/><path d="M410.2,77.4 H412 M410.2,79.4 H412 M410.2,81.5 H412" stroke="#2b88d8" stroke-width="1"/><rect x="400.5" y="95.5" width="11" height="15" fill="#f0f0f0" stroke="#a8a8a8" stroke-width="1"/><rect x="403.5" y="99.5" width="2" height="2" fill="none" stroke="#a8a8a8" stroke-width="1"/><rect x="403.5" y="104.5" width="2" height="2" fill="none" stroke="#a8a8a8" stroke-width="1"/><path d="M407,100.5 H409 M407,105.5 H409" stroke="#a8a8a8" stroke-width="1"/><path d="M400.5,119.5 H406.5 L411.5,124.5 V134.5 H400.5 Z" fill="#f0f0f0"/><path d="M402.5,134.5 H400.5 V119.5 H406.5 L411.5,124.5 V127 M406.5,119.5 V124.5 H411.5" fill="none" stroke="#a8a8a8" stroke-width="1"/><rect x="402" y="127.5" width="13" height="8" fill="#f3f2f1"/><rect x="403.5" y="128.5" width="7.5" height="3.6" rx="1.8" fill="none" stroke="#a8a8a8" stroke-width="1"/><rect x="406.5" y="131" width="7.5" height="3.6" rx="1.8" fill="none" stroke="#a8a8a8" stroke-width="1"/><path d="M573.5,88 L586.5,81 L599.5,88 Z" fill="#fbfbfb" stroke="#363636" stroke-width="1.2" stroke-linejoin="round"/><rect x="576.5" y="88.5" width="20" height="12" fill="#fbfbfb"/><path d="M576.6,88.5 V100.3 M581.6,88.5 V100.3 M586.5,88.5 V100.3 M591.4,88.5 V100.3 M596.4,88.5 V100.3" stroke="#363636" stroke-width="1.2"/><path d="M576,100.5 H597 L599.5,102.2 V103 H573.5 V102.2 Z" fill="#fbfbfb" stroke="#363636" stroke-width="1.2" stroke-linejoin="round"/><path d="M658.5,81.5 L661.5,78.5 L664.5,81.5" fill="none" stroke="#c3c3c3" stroke-width="1"/><path d="M658.5,99.5 L661.5,102.5 L664.5,99.5" fill="none" stroke="#c3c3c3" stroke-width="1"/><path d="M657.5,116.5 H665.5" stroke="#333" stroke-width="1.2"/><path d="M658.5,119.2 L661.5,122 L664.5,119.2" fill="none" stroke="#333" stroke-width="1.2"/><path d="M691.60,85.40 L694.40,79.40 L697.20,85.40 M692.83,83.24 H695.97" fill="none" stroke="#2b88d8" stroke-width="1.2" stroke-linejoin="miter" stroke-miterlimit="4"/><path d="M691.80,88.60 H697.00 L691.80,94.40 H697.00" fill="none" stroke="#363636" stroke-width="1.2" stroke-linejoin="miter"/><path d="M703.5,79 V94.8 M699.7,90.89999999999999 L703.5,94.8 L707.3,90.89999999999999" fill="none" stroke="#363636" stroke-width="1.1"/><path d="M691.80,111.80 H697.00 L691.80,117.40 H697.00" fill="none" stroke="#363636" stroke-width="1.2" stroke-linejoin="miter"/><path d="M691.60,126.50 L694.40,119.90 L697.20,126.50 M692.83,124.12 H695.97" fill="none" stroke="#2b88d8" stroke-width="1.2" stroke-linejoin="miter" stroke-miterlimit="4"/><path d="M703.5,111 V127 M699.7,123.1 L703.5,127 L707.3,123.1" fill="none" stroke="#363636" stroke-width="1.1"/><rect x="717.5" y="72.5" width="27" height="27" fill="#fbfbfb" stroke="#363636" stroke-width="1.1"/><rect x="718" y="73" width="26" height="3" fill="#c6c6c6"/><path d="M717.5,76.5 H744.5 M730.5,76.5 V99.5" stroke="#363636" stroke-width="1.1"/><path d="M721.60,79.90 H726.40 L721.60,86.10 H726.40" fill="none" stroke="#363636" stroke-width="1.2" stroke-linejoin="miter"/><path d="M720.80,96.00 L723.70,89.20 L726.60,96.00 M722.08,93.55 H725.32" fill="none" stroke="#2b88d8" stroke-width="1.2" stroke-linejoin="miter" stroke-miterlimit="4"/><path d="M734.60,86.30 L737.50,79.40 L740.40,86.30 M735.88,83.82 H739.12" fill="none" stroke="#2b88d8" stroke-width="1.2" stroke-linejoin="miter" stroke-miterlimit="4"/><path d="M734.80,89.60 H739.60 L734.80,95.80 H739.60" fill="none" stroke="#363636" stroke-width="1.2" stroke-linejoin="miter"/><path d="M768.5,72.5 H794.5 V76 L785,88 V99.5 H778.5 V88 L768.5,76 Z" fill="#fbfbfb" stroke="#363636" stroke-width="1.1" stroke-linejoin="miter"/><polygon points="806.5,71.5 821.5,71.5 821.5,73.5 815.5,79 815.5,86.5 811.5,86.5 811.5,79 806.5,73.5" fill="#ececec" stroke="#a8a8a8" stroke-width="1"/><rect x="812.2" y="79" width="11" height="9" fill="#f3f2f1"/><path d="M811.5,79 V86.5" stroke="#a8a8a8" stroke-width="1"/><path d="M814,80 L821.5,87.5 M821.5,80 L814,87.5" stroke="#a8a8a8" stroke-width="1.1"/><polygon points="806.5,95.5 821.5,95.5 821.5,97.5 815.5,103 815.5,110.5 811.5,110.5 811.5,103 806.5,97.5" fill="#ececec" stroke="#a8a8a8" stroke-width="1"/><circle cx="817.2" cy="106" r="4.5" fill="#f3f2f1"/><path d="M813.2,105 A4,4 0 0 1 821,104.5 M821.2,107 A4,4 0 0 1 813.4,107.5" fill="none" stroke="#a8a8a8" stroke-width="1"/><path d="M821.4,101.8 V104.8 H818.6 M813.2,110.2 V107.3 H816" fill="none" stroke="#a8a8a8" stroke-width="1"/><polygon points="806.5,119.5 821.5,119.5 821.5,121.5 815.5,127 815.5,134.5 811.5,134.5 811.5,127 806.5,121.5" fill="#fbfbfb" stroke="#363636" stroke-width="1"/><circle cx="817.3" cy="130.3" r="5.2" fill="#f3f2f1"/><path d="M817.30,133.10 L817.30,134.90" stroke="#2b88d8" stroke-width="2.4"/><path d="M814.88,131.70 L813.32,132.60" stroke="#2b88d8" stroke-width="2.4"/><path d="M814.88,128.90 L813.32,128.00" stroke="#2b88d8" stroke-width="2.4"/><path d="M817.30,127.50 L817.30,125.70" stroke="#2b88d8" stroke-width="2.4"/><path d="M819.72,128.90 L821.28,128.00" stroke="#2b88d8" stroke-width="2.4"/><path d="M819.72,131.70 L821.28,132.60" stroke="#2b88d8" stroke-width="2.4"/><circle cx="817.3" cy="130.3" r="3.2" fill="#fff" stroke="#2b88d8" stroke-width="1.3"/><circle cx="817.3" cy="130.3" r="1.3" fill="#2b88d8"/><path d="M915,76.5 H927 M915,80.5 H927 M918.3,84.5 H927" stroke="#363636" stroke-width="1.1"/><rect x="931.5" y="72.5" width="9" height="27" fill="#fbfbfb" stroke="#363636" stroke-width="1.1"/><path d="M931.5,81.5 H940.5 M931.5,90.5 H940.5" stroke="#363636" stroke-width="1.1"/><path d="M934.2,76.5 H937.8 M934.2,85.5 H937.8 M934.2,94.5 H937.8" stroke="#2b88d8" stroke-width="1.1"/><path d="M915.5,84.3 C910,87 910.5,96.5 923.5,96.5" fill="none" stroke="#2b88d8" stroke-width="1.1"/><path d="M918.6,91.6 L923.5,96.5 L918.6,101.4" fill="none" stroke="#2b88d8" stroke-width="1.1"/><rect x="961.5" y="75.5" width="27" height="21" fill="#fbfbfb"/><path d="M968.5,75.5 H988.5 V96.5 H961.5 V89.5" fill="none" stroke="#363636" stroke-width="1.1"/><rect x="968.5" y="75.5" width="13" height="7" fill="#8cc0ec"/><path d="M961.5,89.5 H988.5 M964,82.5 H988.5" stroke="#555" stroke-width="1"/><path d="M968.5,75.5 V96.5 M981.5,75.5 V96.5 M968.5,75.5 H981.5 M968.5,82.5 H981.5 M968.5,89.5 H981.5 M968.5,96.5 H981.5" stroke="#1a6ec4" stroke-width="1.1" fill="none"/><polygon points="960,70.6 966,70.6 972,70.6 967.8,77.3 971.8,77.3 959.5,89.8 963.6,80.6 959.2,80.6" fill="#f3f2f1" stroke="#f3f2f1" stroke-width="2.5"/><polygon points="965.3,70.6 971.6,70.6 967.6,77.3 971.6,77.3 959.6,89.6 963.6,80.6 959.4,80.6" fill="#f7d670" stroke="#e07000" stroke-width="1.1" stroke-linejoin="miter"/><rect x="1016.5" y="72.5" width="19" height="9" fill="#8cc0ec" stroke="#1a6ec4" stroke-width="1.1"/><rect x="1016.5" y="81.5" width="19" height="9" fill="#fbfbfb"/><path d="M1016.5,81.5 V90.5 M1035.5,81.5 V89.5" stroke="#363636" stroke-width="1.1"/><path d="M1016.5,90.5 H1026 L1031,95 L1026,99.5 H1016.5 Z" fill="#8cc0ec" stroke="#1a6ec4" stroke-width="1.1"/><path d="M1028,88 L1041,101 M1041,88 L1028,101" stroke="#e8434a" stroke-width="1.2"/><path d="M1097.8,74.5 H1076.5 V82.5 H1094.7" fill="none" stroke="#363636" stroke-width="1.1"/><path d="M1092.2,77.5 L1096.8,81.8 L1105.6,73.4" fill="none" stroke="#33a24a" stroke-width="1.2"/><path d="M1092.6,88.5 H1076.5 V96.5 H1092.6" fill="#fbfbfb" stroke="#363636" stroke-width="1.1"/><circle cx="1098.4" cy="92.3" r="5" fill="#fbfbfb" stroke="#e8434a" stroke-width="1.2"/><path d="M1095,88.9 L1101.8,95.7" stroke="#e8434a" stroke-width="1.2"/><path d="M1144.5,72.5 V98.5" stroke="#363636" stroke-width="1.1"/><rect x="1144.5" y="72.5" width="11" height="6.5" fill="#fbfbfb" stroke="#363636" stroke-width="1.1"/><rect x="1144.5" y="91.8" width="11" height="6.7" fill="#fbfbfb" stroke="#363636" stroke-width="1.1"/><path d="M1144.5,85.3 H1147.8 M1164,85.3 H1169" stroke="#363636" stroke-width="1.1"/><path d="M1149,85.3 H1159.3 M1155,81 L1159.3,85.3 L1155,89.6" fill="none" stroke="#2b88d8" stroke-width="1.1"/><rect x="1161.5" y="82.5" width="10" height="6" fill="none" stroke="#2b88d8" stroke-width="1.1"/><rect x="1214.5" y="80" width="2" height="12" fill="#b0b0b0"/><polygon points="13.8,172.5 19.3,177.7 9.3,187.5 4.3,182" fill="#fff" stroke="#a33ea1" stroke-width="1.1"/><polygon points="4.3,182 8.7,178.8 12.9,183.4 9.3,187.5" fill="#d89ad7" stroke="#a33ea1" stroke-width="1.1"/><text x="35.4" y="178.6" font-size="9.2" fill="#363636" font-family="Liberation Sans" transform="translate(35.4,178.6) scale(0.95,1) translate(-35.4,-178.6)">.00</text><text x="40.2" y="186.8" font-size="9.2" fill="#363636" font-family="Liberation Sans" transform="translate(40.2,186.8) scale(0.95,1) translate(-40.2,-186.8)">.0</text><path d="M33.2,183.3 H41.5 M38.2,180.3 L41.5,183.3 L38.2,186.3" fill="none" stroke="#2b88d8" stroke-width="1.1"/><text x="69.4" y="178.6" font-size="9.2" fill="#363636" font-family="Liberation Sans" transform="translate(69.4,178.6) scale(0.95,1) translate(-69.4,-178.6)">.0</text><text x="64.5" y="186.8" font-size="9.2" fill="#363636" font-family="Liberation Sans" transform="translate(64.5,186.8) scale(0.95,1) translate(-64.5,-186.8)">.00</text><path d="M62.5,176.4 H70.8 M65.5,173.4 L62.5,176.4 L65.5,179.4" fill="none" stroke="#2b88d8" stroke-width="1.1"/><path d="M166.5,186.5 V173.5 H172 L173,174.5 H181.5 V186.5 Z" fill="#fbfbfb" stroke="#363636" stroke-width="1.1"/><path d="M166.5,175 H172" stroke="#363636" stroke-width="0.8"/><path d="M205.6,175.8 L209.4,172" stroke="#333" stroke-width="2.8" stroke-linecap="round"/><path d="M205.6,175.8 L209.4,172" stroke="#fff" stroke-width="0.9" stroke-linecap="round"/><path d="M202,175.5 L195.5,178.2 L202.2,185.6 L207.2,180.6 Z" fill="#fff" stroke="#e07000" stroke-width="1.1" stroke-linejoin="round"/><path d="M199,181.8 L204.5,183.2 L202.2,185.2 Z" fill="#f7c35c"/><path d="M197.5,180.2 L205.2,182.6" stroke="#e07000" stroke-width="1"/><path d="M202.4,174.4 L208.2,180" stroke="#333" stroke-width="2.8" stroke-linecap="round"/><path d="M202.4,174.4 L208.2,180" stroke="#fff" stroke-width="0.9" stroke-linecap="round"/><path d="M224.5,184.5 V174.5 H229.5 L230.5,175.5 H236.5 V177.5" fill="#fbfbfb" stroke="#363636" stroke-width="1.1"/><path d="M224.5,184.5 L227,178 H239.5 L237,184.5 Z" fill="#fbfbfb" stroke="#363636" stroke-width="1.1"/><path d="M253.5,172.5 H268.5 V187.5 H255 L253.5,186 Z" fill="#d89ad7" stroke="#a33ea1" stroke-width="1.1"/><rect x="256.7" y="173" width="8.6" height="5" fill="#fff" stroke="#a33ea1" stroke-width="1"/><rect x="257.6" y="182" width="7.2" height="5.5" fill="#fff" stroke="#a33ea1" stroke-width="1"/><path d="M284.5,173 V186.5 L287.6,183.5 L290,187.8 L291.8,186.8 L289.6,182.6 H294 Z" fill="#fff" stroke="#363636" stroke-width="1.1" stroke-linejoin="miter"/><path d="M311.60,178.30 L314.45,172.30 L317.30,178.30 M312.85,176.14 H316.05" fill="none" stroke="#2b88d8" stroke-width="1.2" stroke-linejoin="miter" stroke-miterlimit="4"/><path d="M311.80,181.70 H317.10 L311.80,187.10 H317.10" fill="none" stroke="#363636" stroke-width="1.2" stroke-linejoin="miter"/><path d="M323.6,172.5 V187.8 M319.8,183.9 L323.6,187.8 L327.40000000000003,183.9" fill="none" stroke="#363636" stroke-width="1.1"/><path d="M340.60,172.80 H345.40 L340.60,178.40 H345.40" fill="none" stroke="#363636" stroke-width="1.2" stroke-linejoin="miter"/><path d="M340.20,187.50 L343.00,181.20 L345.80,187.50 M341.43,185.23 H344.57" fill="none" stroke="#2b88d8" stroke-width="1.2" stroke-linejoin="miter" stroke-miterlimit="4"/><path d="M352.5,172.5 V187.8 M348.7,183.9 L352.5,187.8 L356.3,183.9" fill="none" stroke="#363636" stroke-width="1.1"/><path d="M369.5,175.5 H373.5 L376.5,178.5 V184.5 H369.5 Z" fill="#f0f0f0"/><path d="M376.5,184.5 H369.5 V175.5 H373.5 L376.5,178.5 V184.5 M373.5,175.5 V178.5 H376.5" fill="none" stroke="#a8a8a8" stroke-width="1"/><path d="M377.5,175.5 H381.5 L384.5,178.5 V184.5 H377.5 Z" fill="#f0f0f0"/><path d="M384.5,184.5 H377.5 V175.5 H381.5 L384.5,178.5 V184.5 M381.5,175.5 V178.5 H384.5" fill="none" stroke="#a8a8a8" stroke-width="1"/><path d="M400.5,172.5 H406.5 L411.5,177.5 V187.5 H400.5 Z" fill="#fbfbfb"/><path d="M411.5,187.5 H400.5 V172.5 H406.5 L411.5,177.5 V187.5 M406.5,172.5 V177.5 H411.5" fill="none" stroke="#363636" stroke-width="1"/><path d="M431,176.5 H438 M431.5,178.8 L434.5,181.5 L437.5,178.8" fill="none" stroke="#444" stroke-width="1.1"/><path d="M279,214.8 L289,223.6 M289,214.8 L279,223.6" stroke="#c4c4c4" stroke-width="1.3"/><path d="M314.2,219.8 L318.9,224 L326.5,214.4" fill="none" stroke="#c8c8c8" stroke-width="2"/><text x="350" y="222.5" font-size="13" font-style="italic" font-weight="bold" fill="#555" font-family="Liberation Serif">f</text><text x="355.3" y="222.8" font-size="9.5" font-style="italic" font-weight="bold" fill="#555" font-family="Liberation Serif">x</text><path d="M372,47 L340.14,29.48 A20,20 0 1 0 340.14,64.52 Z" fill="#f7ab0b" filter="url(#sh)"/><text x="327.2" y="55" font-size="22" fill="#fff" font-family="Liberation Sans"></text><path d="M336.4,39.6 V54.6" stroke="#fff" stroke-width="2.3"/><path d="M336.6,40.2 L331,43.8" stroke="#fff" stroke-width="2"/><path d="M163,90.6 L129.83,73.25 A19.7,19.7 0 1 0 129.92,108.11 Z" fill="#f7ab0b" filter="url(#sh)"/><text x="119" y="99.2" font-size="22" fill="#fff" font-family="Liberation Sans">2</text></svg>
</body></html>
